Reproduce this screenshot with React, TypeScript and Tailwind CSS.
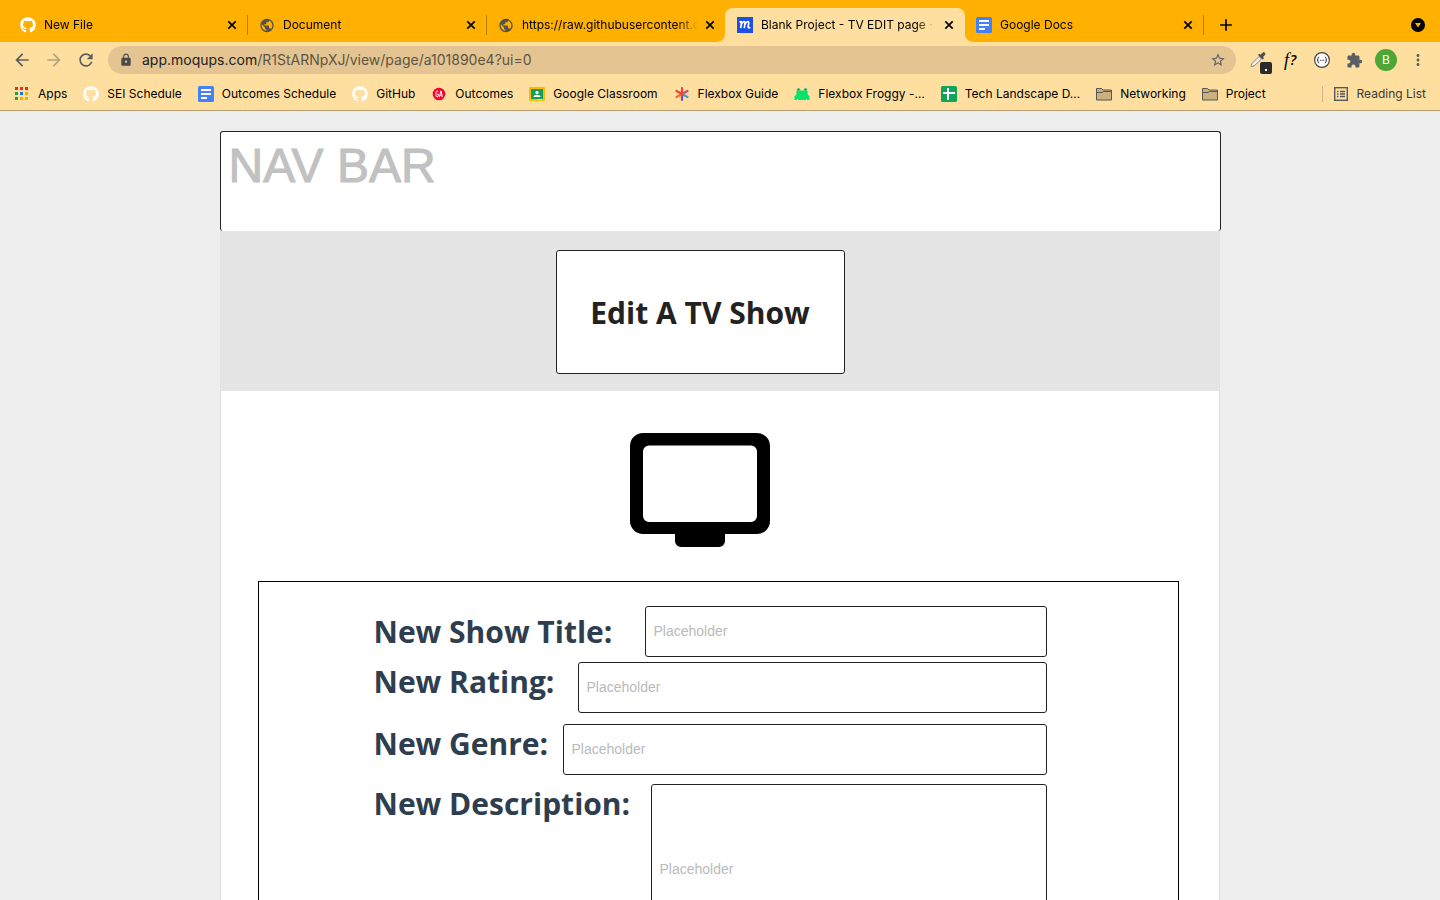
import type { ReactNode } from "react";
import { FaGithub } from "react-icons/fa";
import {
  MdAdd,
  MdArrowBack,
  MdArrowForward,
  MdExtension,
  MdLock,
  MdMoreVert,
  MdPublic,
  MdRefresh,
  MdStarBorder,
} from "react-icons/md";

function DocsIcon() {
  return (
    <svg viewBox="0 0 16 16" className="size-4">
      <rect width="16" height="16" rx="1.5" fill="#4480f7" />
      <path d="M3 3h10v2H3zM3 7h10v2H3zM3 11h6v2H3z" fill="#fff" />
    </svg>
  );
}

function SheetsIcon() {
  return (
    <svg viewBox="0 0 16 16" className="size-4">
      <rect width="16" height="16" rx="1.5" fill="#0fa45c" />
      <path d="M6 2h2v4h6v2H8v6H6V8H2V6h4z" fill="#fff" />
    </svg>
  );
}

function MoqupsIcon() {
  return (
    <svg viewBox="0 0 16 16" className="size-4">
      <rect width="16" height="16" fill="#1d50e2" />
      <path
        d="M2.6 5.3C3.6 4.3 4.700 4.2 4.5 5.6L3.700 11.2M4.3 7.6C5.3 4.6 8.4 3.4 8 6.2L7.3 11.2M7.8 7.6C8.9 4.6 12.2 3.4 11.700 6.2L11.1 9.6C11 11.2 12.2 11.3 13.2 10.1"
        fill="none"
        stroke="#fff"
        strokeWidth="1.7"
      />
    </svg>
  );
}

function AppsIcon() {
  const colors = ["#ea2a1e", "#ea2a1e", "#ea2a1e", "#16a04a", "#1a73f0", "#f9ab00", "#16a04a", "#f9ab00", "#f9ab00"];
  return (
    <svg viewBox="0 0 16 16" className="size-4">
      {colors.map((color, i) => (
        <rect key={i} x={1 + (i % 3) * 5} y={1 + Math.floor(i / 3) * 5} width="3" height="3" fill={color} />
      ))}
    </svg>
  );
}

function AssemblyIcon() {
  return (
    <svg viewBox="0 0 16 16" className="size-4">
      <circle cx="8" cy="8" r="6.3" fill="#f5002f" />
      <path
        d="M7.2 5.8C6.8 4.6 5 4.7 5 6.2v3.6c0 1.5 2.3 1.5 2.3 0V8.200H6.300M8.500 11.200 9.700 5h.5l1.100 6.200M8.800 9.300h2.100"
        fill="none"
        stroke="#fff"
      />
    </svg>
  );
}

function ClassroomIcon() {
  return (
    <svg viewBox="0 0 16 16" className="size-4">
      <rect y="1" width="16" height="14" rx="1" fill="#f9bb0a" />
      <rect x="2" y="3" width="12" height="10" fill="#189d58" />
      <circle cx="8" cy="6.5" r="1.6" fill="#fff" />
      <path d="M4.500 11c0-3 7-3 7 0z" fill="#fff" />
      <path d="M9 13h4v1H9z" fill="#eee" />
    </svg>
  );
}

function GuideIcon() {
  return (
    <svg viewBox="0 0 16 16" className="size-4" fill="none" strokeWidth="2.2" strokeLinecap="round">
      <path d="M8 8V2" stroke="#e5484d" />
      <path d="m8 8 5.500-3" stroke="#cf4a7f" />
      <path d="m8 8 5.500 3" stroke="#37a8c4" />
      <path d="M8 8v6" stroke="#7b4fb0" />
      <path d="m8 8-5.500 3" stroke="#f56a2c" />
      <path d="M8 8 2.500 5" stroke="#e8462f" />
    </svg>
  );
}

function FrogIcon() {
  return (
    <svg viewBox="0 0 16 16" className="size-4">
      <path d="M2.500 5 5 4.500h6l2.500.5.3 4 1.700 1v4H.5v-4L2.200 9z" fill="#08e36c" />
      <circle cx="4.500" cy="3.900" r="1.900" fill="#3fc879" />
      <circle cx="11.500" cy="3.900" r="1.900" fill="#3fc879" />
      <path d="M4 3h1v1H4zM11 3h1v1h-1z" fill="#276b48" />
      <path d="M1.500 8.500V6M14.500 8.500V6M3.500 13v1.500M12.500 13v1.500" stroke="#ffdfa0" />
    </svg>
  );
}

function FolderIcon() {
  return (
    <svg viewBox="0 0 16 16" className="size-4" fill="#ccb17f" stroke="#56585a">
      <path d="M.5 14V2.500h5L7 4h8.500v10z" />
      <path d="M.5 6.500H6L7.500 5.500h8" fill="none" />
    </svg>
  );
}

function ReadingListIcon() {
  return (
    <svg viewBox="0 0 16 16" className="size-4" stroke="#56585a" fill="none">
      <rect x="1.700" y="1.700" width="12.600" height="12.600" strokeWidth="1.400" />
      <path d="M4 5.500h1.500M4 8h1.500M4 10.500h1.500M7 5.500h5M7 8h5M7 10.500h5" strokeWidth="1.400" />
    </svg>
  );
}

type TabData = { title: string; icon: ReactNode; active?: boolean; divider?: boolean };

const globe = <MdPublic className="size-[17px] text-[#55524e]" />;
const github = <FaGithub className="size-4 text-white" />;

const tabs: TabData[] = [
  { title: "New File", icon: github, divider: true },
  { title: "Document", icon: globe, divider: true },
  { title: "https://raw.githubusercontent.com", icon: globe },
  { title: "Blank Project - TV EDIT page · Moqups", icon: <MoqupsIcon />, active: true },
  { title: "Google Docs", icon: <DocsIcon />, divider: true },
];

const bookmarks: { label: string; icon: ReactNode }[] = [
  { label: "Apps", icon: <AppsIcon /> },
  { label: "SEI Schedule", icon: github },
  { label: "Outcomes Schedule", icon: <DocsIcon /> },
  { label: "GitHub", icon: github },
  { label: "Outcomes", icon: <AssemblyIcon /> },
  { label: "Google Classroom", icon: <ClassroomIcon /> },
  { label: "Flexbox Guide", icon: <GuideIcon /> },
  { label: "Flexbox Froggy -…", icon: <FrogIcon /> },
  { label: "Tech Landscape D…", icon: <SheetsIcon /> },
  { label: "Networking", icon: <FolderIcon /> },
  { label: "Project", icon: <FolderIcon /> },
];

function Tab({ title, icon, active, divider }: TabData) {
  return (
    <div
      className={
        active
          ? "relative -mr-px flex h-[34px] w-60 items-center rounded-t-lg bg-[#ffdfa0] pr-2 pl-3"
          : "relative flex h-[34px] w-[239px] items-center pr-[7px] pl-3"
      }
    >
      {active && (
        <>
          <svg viewBox="0 0 8 8" className="absolute bottom-0 -left-2 size-2">
            <path d="M8 0v8H0a8 8 0 0 0 8-8z" fill="#ffdfa0" />
          </svg>
          <svg viewBox="0 0 8 8" className="absolute -right-2 bottom-0 size-2">
            <path d="M0 0v8h8a8 8 0 0 1-8-8z" fill="#ffdfa0" />
          </svg>
        </>
      )}
      <a href="#" className="flex min-w-0 flex-1 items-center gap-2">
        <span className="flex size-4 shrink-0 items-center justify-center">{icon}</span>
        <span className="min-w-0 flex-1 overflow-hidden whitespace-nowrap [mask-image:linear-gradient(to_right,black_88%,transparent)]">
          {title}
        </span>
      </a>
      <button aria-label="Close tab" className="ml-1 flex size-4 items-center justify-center">
        <svg viewBox="0 0 16 16" className="size-4">
          <path d="m4.300 4.300 7.400 7.400M11.700 4.300l-7.400 7.400" stroke="#000" strokeWidth="1.700" />
        </svg>
      </button>
      {divider && <span className="absolute top-[7px] -right-px h-5 w-px bg-[#b37c05]" />}
    </div>
  );
}

function BrowserChrome() {
  return (
    <header className="shrink-0 border-b border-[#b39c70] bg-[#ffdfa0] font-['Inter',sans-serif] text-xs text-black">
      <div className="flex h-[42px] items-end bg-[#ffb000] pl-2">
        {tabs.map((tab) => (
          <Tab key={tab.title} {...tab} />
        ))}
        <button aria-label="New tab" className="ml-[13px] flex h-[34px] w-5 items-center justify-center">
          <MdAdd className="size-5 shrink-0" />
        </button>
        <button aria-label="Search tabs" className="mr-[15px] ml-auto flex h-[34px] items-center">
          <svg viewBox="0 0 14 14" className="size-[14px]">
            <circle cx="7" cy="7" r="7" />
            <path d="M4 5h6L7 9.500z" fill="#ffb000" />
          </svg>
        </button>
      </div>

      <div className="flex h-9 items-center pr-[11px] pl-3 text-[#5b5f63]">
        <button aria-label="Back">
          <MdArrowBack className="size-5" />
        </button>
        <button aria-label="Forward" className="ml-3 text-[#b5a37f]">
          <MdArrowForward className="size-5" />
        </button>
        <button aria-label="Reload" className="ml-3">
          <MdRefresh className="size-5" />
        </button>
        <div className="ml-3 flex h-7 flex-1 items-center rounded-full bg-[#e4c592] pr-[10px] pl-[11px] text-sm">
          <MdLock className="size-[14px] text-[#4a4a4a]" />
          <p className="ml-[9px] flex-1 text-[#5e5444]">
            <span className="text-[#202124]">app.moqups.com</span>/R1StARNpXJ/view/page/a101890e4?ui=0
          </p>
          <button aria-label="Bookmark this page">
            <MdStarBorder className="size-4" />
          </button>
        </div>
        <div className="ml-[11px] flex items-center gap-[10px]">
          <button aria-label="Color picker" className="relative size-[22px]">
            <svg viewBox="0 0 22 22" className="size-[22px]">
              <path d="M4 17.500 4.500 15l7.500-7.500 2.500 2.500L7 17z" fill="#f3efe6" stroke="#8c8980" />
              <path
                d="m11 6 1.300-1.200 1.400.9 1.800-2c1.500-1.500 4 .8 2.500 2.300l-2 1.900 1 1.300-1.400 1.400z"
                fill="#4c4d50"
              />
            </svg>
            <span className="absolute -right-[3px] -bottom-[3px] flex size-3 items-center justify-center rounded-xs bg-[#2b2b2b]">
              <span className="mt-1 size-[2px] bg-white" />
            </span>
          </button>
          <button
            aria-label="WhatFont"
            className="flex size-[22px] items-center justify-center gap-px font-['Liberation_Serif',serif] text-lg leading-none text-black italic"
          >
            f
            <span className="font-['Open_Sans',sans-serif] text-sm leading-none font-semibold">?</span>
          </button>
          <button aria-label="JSON viewer" className="flex size-[22px] items-center justify-center">
            <svg viewBox="0 0 16 16" className="size-4">
              <circle cx="8" cy="8" r="7.400" fill="#fff" stroke="#444" strokeWidth="1.200" />
              <path
                d="M5.200 5Q4 5 4 6.500T3 8q1 0 1 1.500T5.200 11M10.800 5Q12 5 12 6.500T13 8q-1 0-1 1.500T10.800 11M5.800 8.300h1M7.600 8.300h1M9.300 8.300h1"
                fill="none"
                stroke="#222"
              />
            </svg>
          </button>
          <button aria-label="Extensions" className="flex size-[22px] items-center justify-center">
            <MdExtension className="size-[17px]" />
          </button>
          <button
            aria-label="Profile"
            className="flex size-[22px] items-center justify-center rounded-full bg-[#4da635] text-xs text-white"
          >
            B
          </button>
          <button aria-label="Menu" className="flex size-[22px] items-center justify-center">
            <MdMoreVert className="size-[18px]" />
          </button>
        </div>
      </div>

      <nav aria-label="Bookmarks" className="flex h-8 items-center gap-4 pr-[14px] pl-[14px] whitespace-nowrap">
        {bookmarks.map(({ label, icon }) => (
          <a key={label} href="#" className="flex items-center gap-2">
            {icon}
            {label}
          </a>
        ))}
        <button className="ml-auto flex items-center gap-2 text-[#3a3833]">
          <span className="mr-[2px] h-4 w-px bg-[#cfb68a]" />
          <ReadingListIcon />
          Reading List
        </button>
      </nav>
    </header>
  );
}

const labelStyle = "shrink-0 font-['Open_Sans',sans-serif] text-[30px] leading-10 font-bold text-[#2f3e4e]";
const fieldStyle =
  "min-w-0 flex-1 rounded-[3px] border border-[#222] bg-white px-2 font-['Liberation_Sans',sans-serif] text-sm outline-none placeholder:text-[#bababa]";

function EditShowForm() {
  return (
    <form className="mt-[34px] mr-10 ml-[37px] border border-black pt-6 pr-[131px] pb-10 pl-[115px]">
      <div className="flex items-center">
        <label htmlFor="title" className={`${labelStyle} w-[271px]`}>
          New Show Title:
        </label>
        <input id="title" placeholder="Placeholder" className={`${fieldStyle} h-[51px] pb-[2px]`} />
      </div>
      <div className="mt-[5px] flex items-start">
        <label htmlFor="rating" className={`${labelStyle} w-[204px]`}>
          New Rating:
        </label>
        <input id="rating" placeholder="Placeholder" className={`${fieldStyle} h-[51px] pb-[2px]`} />
      </div>
      <div className="mt-[11px] flex items-start">
        <label htmlFor="genre" className={`${labelStyle} w-[189px]`}>
          New Genre:
        </label>
        <input id="genre" placeholder="Placeholder" className={`${fieldStyle} h-[51px] pb-[2px]`} />
      </div>
      <div className="mt-[9px] flex items-start">
        <label htmlFor="description" className={`${labelStyle} w-[277px]`}>
          New Description:
        </label>
        <textarea
          id="description"
          placeholder="Placeholder"
          className={`${fieldStyle} h-[171px] resize-none pt-[74px]`}
        />
      </div>
    </form>
  );
}

export default function App() {
  return (
    <div className="flex h-screen flex-col bg-[#eeeeee]">
      <BrowserChrome />
      <main className="flex-1 overflow-y-auto pt-5 [scrollbar-width:none]">
        <div className="mx-auto w-full max-w-[1001px]">
          <nav className="h-[100px] rounded-[3px] border border-b-0 border-[#222] bg-white px-2 pt-[7px]">
            <span className="font-['Liberation_Sans',sans-serif] text-5xl leading-[54px] text-[#c1c1c1] [-webkit-text-stroke:1px]">
              NAV BAR
            </span>
          </nav>
          <div className="mr-px border-x border-[#e2e2e2] bg-white pb-10">
            <div className="flex justify-center bg-[#e5e5e5] pt-[19px] pr-[39px] pb-[17px]">
              <h1 className="flex h-[124px] w-[289px] items-center justify-center rounded-[3px] border border-[#222] bg-white pt-[2px] font-['Open_Sans',sans-serif] text-[30px] leading-10 font-bold text-[#222]">
                Edit A TV Show
              </h1>
            </div>
            <div className="flex justify-center pt-[42px] pr-10">
              <svg viewBox="0 0 140 114" className="h-[114px] w-[140px]">
                <path
                  fillRule="evenodd"
                  d="M13 0h114a13 13 0 0 1 13 13v75a13 13 0 0 1-13 13H95v7a6 6 0 0 1-6 6H51a6 6 0 0 1-6-6v-7H13A13 13 0 0 1 0 88V13A13 13 0 0 1 13 0zm6 12.500a6 6 0 0 0-6 6V83a6 6 0 0 0 6 6h102a6 6 0 0 0 6-6V18.500a6 6 0 0 0-6-6z"
                />
              </svg>
            </div>
            <EditShowForm />
          </div>
        </div>
      </main>
    </div>
  );
}
